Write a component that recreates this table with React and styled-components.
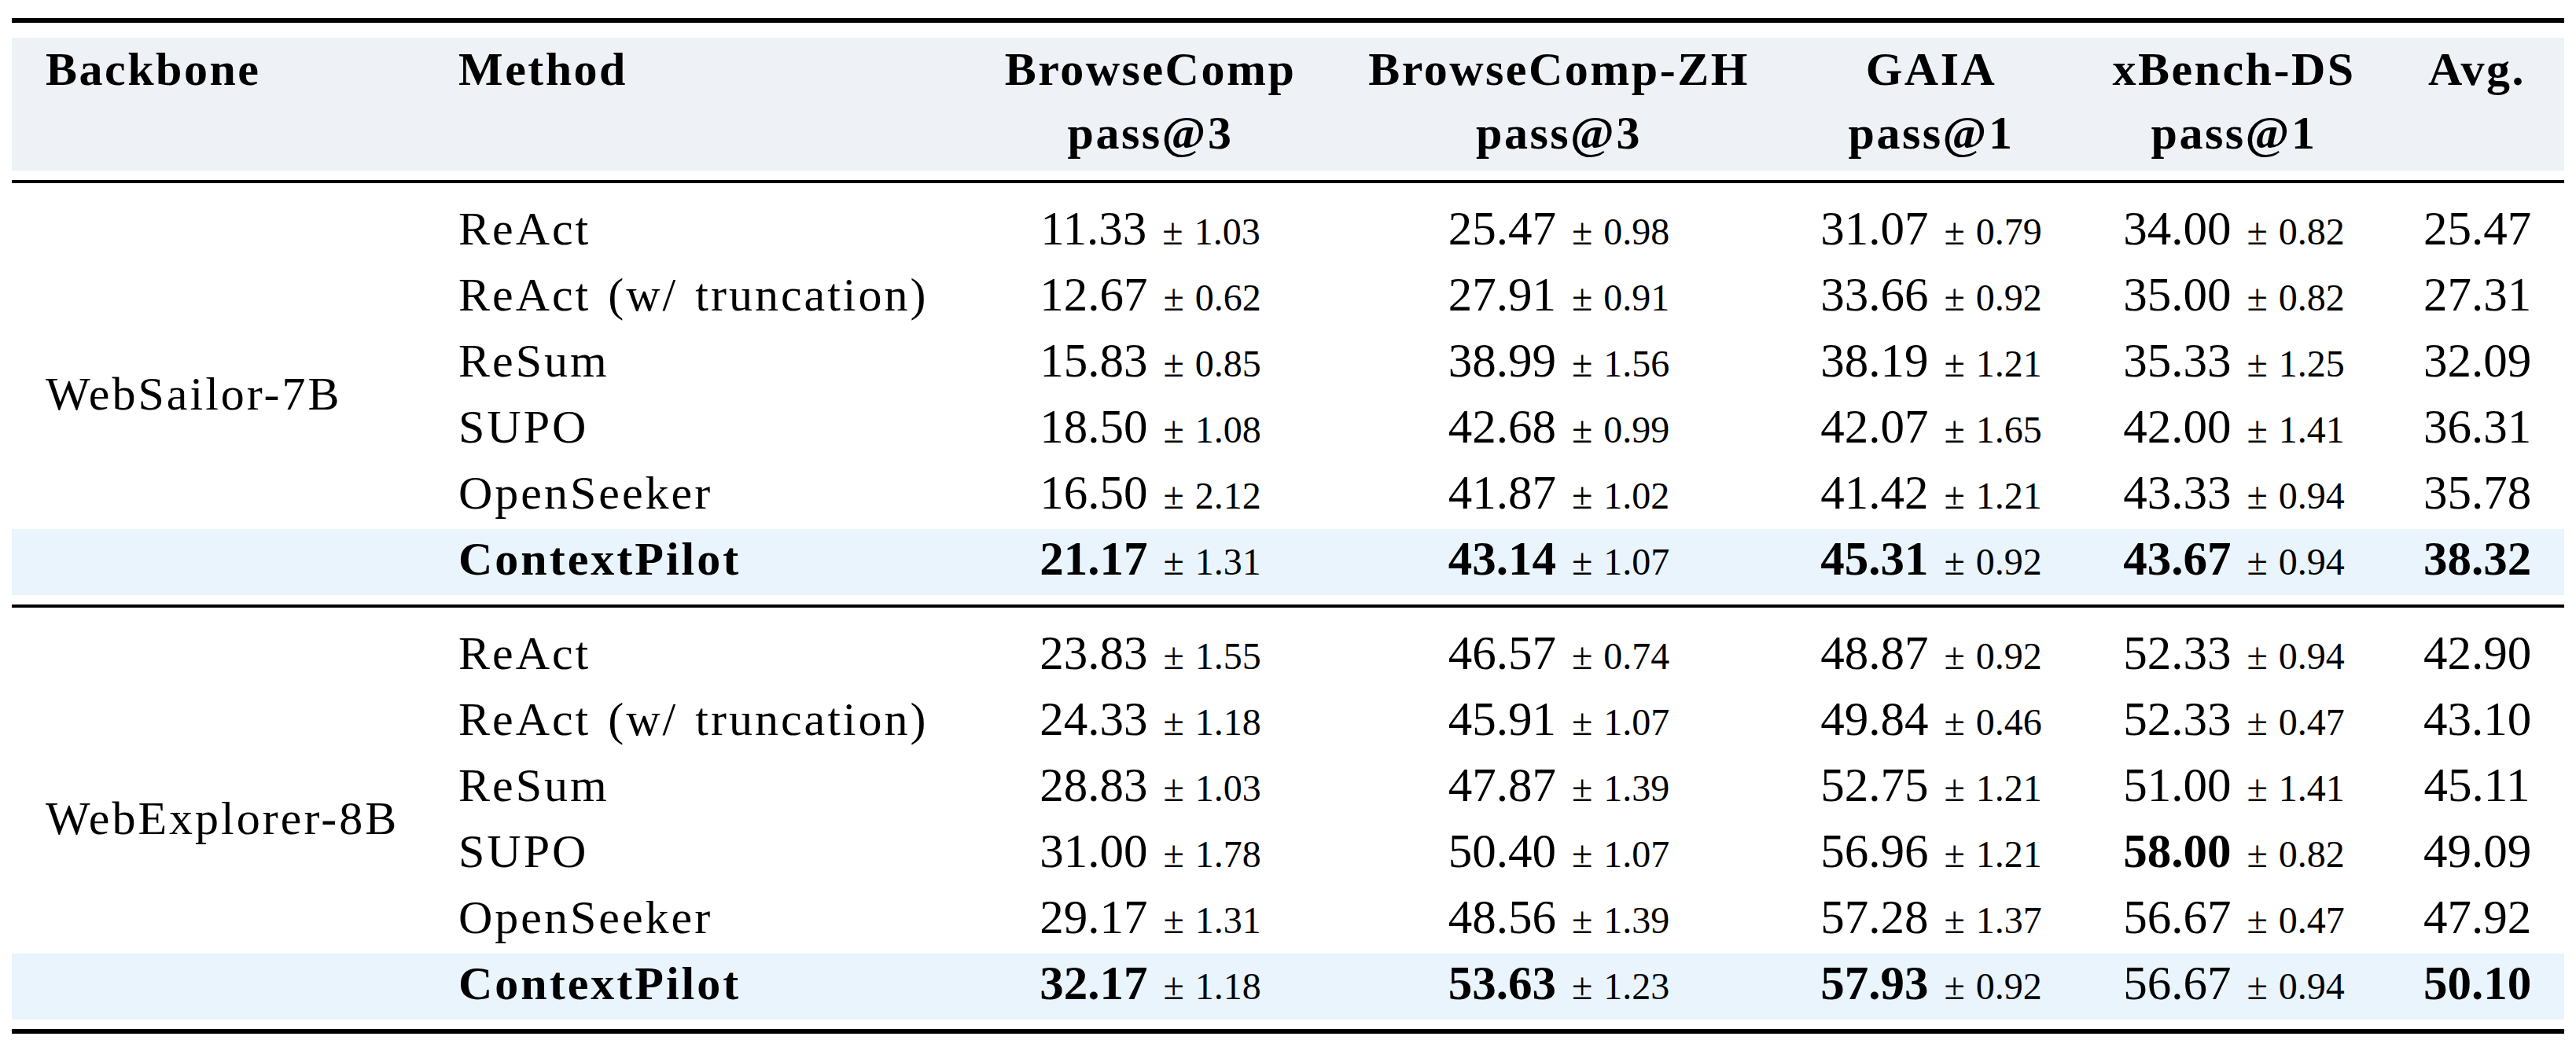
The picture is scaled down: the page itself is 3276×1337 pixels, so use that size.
import React from "react";
import styled, { createGlobalStyle } from "styled-components";

const COLS = "525px 690px 466px 573px 374px 396px 222px";
const HEAD_BG = "#eef2f6";
const HL_BG = "#e9f4fc";

const GlobalStyle = createGlobalStyle`
  html, body { margin: 0; padding: 0; background: #ffffff; }
  body {
    font-family: "Liberation Serif", "Times New Roman", serif;
    color: #000;
  }
`;

const Page = styled.div`
  padding: 23px 0 0 15px;
`;

const Table = styled.div`
  width: 3246px;
  display: flex;
  flex-direction: column;
`;

const Rule = styled.div`
  height: ${(p) => (p.$thick ? 6 : 4)}px;
  background: #000;
`;

const Header = styled.div`
  display: grid;
  grid-template-columns: ${COLS};
  background: ${HEAD_BG};
  margin: 19px 0 12px;
`;

const HeadCell = styled.div`
  padding: 0 43px 7px;
  font-size: 60px;
  line-height: 81px;
  font-weight: 700;
  letter-spacing: 2.5px;
  text-align: ${(p) => p.$align || "center"};
  white-space: nowrap;
`;

const Group = styled.div`
  display: grid;
  grid-template-columns: ${COLS};
  grid-auto-rows: 84px;
  padding: 20px 0 12px;
`;

const Cell = styled.div`
  font-size: 60px;
  line-height: 76px;
  padding: 0 43px 8px;
  background: ${(p) => (p.$hl ? HL_BG : "transparent")};
  text-align: ${(p) => p.$align || "center"};
  white-space: nowrap;
`;

const Spacer = styled.div`
  grid-column: 1;
  grid-row: ${(p) => p.$row};
  background: ${(p) => (p.$hl ? HL_BG : "transparent")};
`;

const BackboneLabel = styled.div`
  grid-column: 1;
  grid-row: 1 / span 6;
  align-self: center;
  z-index: 1;
  font-size: 60px;
  line-height: 76px;
  padding: 0 43px 8px;
  letter-spacing: 3px;
  white-space: nowrap;
`;

const MethodText = styled.span`
  font-weight: ${(p) => (p.$bold ? 700 : 400)};
  letter-spacing: 3px;
  word-spacing: 4px;
`;

const Main = styled.span`
  font-weight: ${(p) => (p.$bold ? 700 : 400)};
  font-size: 61px;
`;

const Dev = styled.span`
  font-size: 48px;
  font-weight: 400;
  margin-left: 20px;
`;

const DevNum = styled.span`
  margin-left: 14px;
`;

const groups = [
  {
    backbone: "WebSailor-7B",
    rows: [
      { m: "ReAct", v: [["11.33", "1.03"], ["25.47", "0.98"], ["31.07", "0.79"], ["34.00", "0.82"]], avg: "25.47" },
      { m: "ReAct (w/ truncation)", v: [["12.67", "0.62"], ["27.91", "0.91"], ["33.66", "0.92"], ["35.00", "0.82"]], avg: "27.31" },
      { m: "ReSum", v: [["15.83", "0.85"], ["38.99", "1.56"], ["38.19", "1.21"], ["35.33", "1.25"]], avg: "32.09" },
      { m: "SUPO", v: [["18.50", "1.08"], ["42.68", "0.99"], ["42.07", "1.65"], ["42.00", "1.41"]], avg: "36.31" },
      { m: "OpenSeeker", v: [["16.50", "2.12"], ["41.87", "1.02"], ["41.42", "1.21"], ["43.33", "0.94"]], avg: "35.78" },
      {
        m: "ContextPilot",
        hl: true,
        v: [["21.17", "1.31", true], ["43.14", "1.07", true], ["45.31", "0.92", true], ["43.67", "0.94", true]],
        avg: "38.32",
        avgBold: true,
      },
    ],
  },
  {
    backbone: "WebExplorer-8B",
    rows: [
      { m: "ReAct", v: [["23.83", "1.55"], ["46.57", "0.74"], ["48.87", "0.92"], ["52.33", "0.94"]], avg: "42.90" },
      { m: "ReAct (w/ truncation)", v: [["24.33", "1.18"], ["45.91", "1.07"], ["49.84", "0.46"], ["52.33", "0.47"]], avg: "43.10" },
      { m: "ReSum", v: [["28.83", "1.03"], ["47.87", "1.39"], ["52.75", "1.21"], ["51.00", "1.41"]], avg: "45.11" },
      { m: "SUPO", v: [["31.00", "1.78"], ["50.40", "1.07"], ["56.96", "1.21"], ["58.00", "0.82", true]], avg: "49.09" },
      { m: "OpenSeeker", v: [["29.17", "1.31"], ["48.56", "1.39"], ["57.28", "1.37"], ["56.67", "0.47"]], avg: "47.92" },
      {
        m: "ContextPilot",
        hl: true,
        v: [["32.17", "1.18", true], ["53.63", "1.23", true], ["57.93", "0.92", true], ["56.67", "0.94"]],
        avg: "50.10",
        avgBold: true,
      },
    ],
  },
];

const headers = [
  ["BrowseComp", "pass@3"],
  ["BrowseComp-ZH", "pass@3"],
  ["GAIA", "pass@1"],
  ["xBench-DS", "pass@1"],
];

function ValueCell({ main, dev, bold, hl }) {
  return (
    <Cell $hl={hl}>
      <Main $bold={bold}>{main}</Main>
      <Dev>
        ±<DevNum>{dev}</DevNum>
      </Dev>
    </Cell>
  );
}

function GroupBlock({ group }) {
  return (
    <Group>
      {group.rows.map((r, i) => (
        <Spacer key={`s${i}`} $row={i + 1} $hl={r.hl} />
      ))}
      <BackboneLabel>{group.backbone}</BackboneLabel>
      {group.rows.map((r, i) => (
        <React.Fragment key={i}>
          <Cell $hl={r.hl} $align="left">
            <MethodText $bold={r.hl}>{r.m}</MethodText>
          </Cell>
          {r.v.map((v, j) => (
            <ValueCell key={j} main={v[0]} dev={v[1]} bold={v[2]} hl={r.hl} />
          ))}
          <Cell $hl={r.hl}>
            <Main $bold={r.avgBold}>{r.avg}</Main>
          </Cell>
        </React.Fragment>
      ))}
    </Group>
  );
}

export default function App() {
  return (
    <>
      <GlobalStyle />
      <Page>
        <Table>
          <Rule $thick />
          <Header>
            <HeadCell $align="left">Backbone</HeadCell>
            <HeadCell $align="left">Method</HeadCell>
            {headers.map((h) => (
              <HeadCell key={h[0]}>
                {h[0]}
                <br />
                {h[1]}
              </HeadCell>
            ))}
            <HeadCell>Avg.</HeadCell>
          </Header>
          <Rule />
          <GroupBlock group={groups[0]} />
          <Rule />
          <GroupBlock group={groups[1]} />
          <Rule $thick />
        </Table>
      </Page>
    </>
  );
}
